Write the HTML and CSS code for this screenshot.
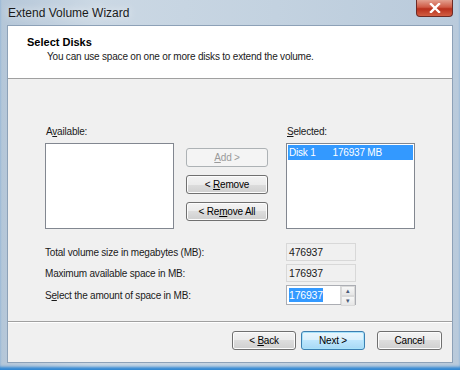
FILE: index.html
```html
<!DOCTYPE html>
<html lang="en">

<head>
    <meta charset="UTF-8">
    <title>Extend Volume Wizard</title>
    <link rel="stylesheet" href="styles.css">
</head>

<body>
    <div class="janela">
        <div class="titulo">
            <span class="titulo-texto">Extend Volume Wizard</span>
            <div class="fechar">
                <svg width="14" height="10" viewBox="0 0 14 10">
                    <path d="M3 1 L11 9 M11 1 L3 9" stroke="#fff" stroke-width="2.4" stroke-linecap="square" />
                </svg>
            </div>
        </div>
        <div class="cliente">
            <div class="cabecalho">
                <h1>Select Disks</h1>
                <p>You can use space on one or more disks to extend the volume.</p>
            </div>
            <div class="corpo">
                <div class="discos">
                    <div class="coluna">
                        <label>A<u>v</u>ailable:</label>
                        <div class="lista"></div>
                    </div>
                    <div class="botoes-meio">
                        <button class="btn" disabled><u>A</u>dd &gt;</button>
                        <button class="btn">&lt; <u>R</u>emove</button>
                        <button class="btn">&lt; Re<u>m</u>ove All</button>
                    </div>
                    <div class="coluna">
                        <label><u>S</u>elected:</label>
                        <div class="lista">
                            <div class="item"><span>Disk 1</span><span>176937 MB</span></div>
                        </div>
                    </div>
                </div>
                <div class="tamanhos">
                    <div class="linha">
                        <span>Total volume size in megabytes (MB):</span>
                        <div class="campo">476937</div>
                    </div>
                    <div class="linha">
                        <span>Maximum available space in MB:</span>
                        <div class="campo">176937</div>
                    </div>
                    <div class="linha">
                        <span>S<u>e</u>lect the amount of space in MB:</span>
                        <div class="campo spin">
                            <span class="sel">176937</span>
                            <div class="setas">
                                <div class="seta">&#9652;</div>
                                <div class="seta">&#9662;</div>
                            </div>
                        </div>
                    </div>
                </div>
            </div>
            <div class="rodape">
                <button class="btn">&lt; <u>B</u>ack</button>
                <button class="btn padrao">Next &gt;</button>
                <button class="btn cancelar">Cancel</button>
            </div>
        </div>
    </div>
</body>

</html>
```
FILE: styles.css
```css
* {
    margin: 0;
    padding: 0;
    box-sizing: border-box;
    font-family: 'Liberation Sans', Arial, sans-serif;
}

body {
    width: 460px;
    height: 370px;
    overflow: hidden;
}

.janela {
    width: 460px;
    height: 370px;
    display: flex;
    flex-direction: column;
    background: linear-gradient(90deg, #b4c6d8, #cbd8e4 20%, #c3d2e0 60%, #b9cadb);
    padding: 0 7px 7px 7px;
    box-shadow: inset 0 -4px 3px -1px #2f86d2;
}

.titulo {
    height: 25px;
    display: flex;
    align-items: center;
    justify-content: space-between;
    position: relative;
}

.titulo-texto {
    font-size: 12px;
    color: #1a1a1a;
    padding-left: 1px;
    text-shadow: 0 0 8px #fff;
}

.fechar {
    position: absolute;
    right: 0;
    top: 0;
    width: 37px;
    height: 17px;
    border: 1px solid #6d2a25;
    border-top: none;
    border-radius: 0 0 4px 4px;
    background: linear-gradient(#e3a08f, #cf5a45 45%, #b8301c 55%, #d25e43);
    display: flex;
    align-items: center;
    justify-content: center;
}

.cliente {
    flex: 1;
    display: flex;
    flex-direction: column;
    background: #f0f0f0;
    border: 1px solid #8da1b7;
    font-size: 10px;
    letter-spacing: -0.2px;
    color: #1a1a1a;
}

.cabecalho {
    height: 53px;
    background: #fff;
    border-bottom: 1px solid #a0a0a0;
    padding: 10px 0 0 19px;
}

.cabecalho h1 {
    font-size: 11px;
    font-weight: bold;
    letter-spacing: 0;
    color: #000;
}

.cabecalho p {
    padding: 3px 0 0 20px;
}

.corpo {
    flex: 1;
    padding: 47px 0 0 37px;
    border-bottom: 1px solid #a0a0a0;
    box-shadow: 0 1px 0 #fff;
}

.discos {
    display: flex;
    align-items: flex-start;
}

.coluna {
    display: flex;
    flex-direction: column;
    gap: 4px;
}

.coluna label {
    padding-left: 1px;
    height: 13px;
}

.lista {
    width: 129px;
    height: 86px;
    background: #fff;
    border: 1px solid #828790;
    padding: 1px;
}

.item {
    height: 15px;
    background: #3399ff;
    color: #fff;
    display: flex;
    gap: 17px;
    align-items: center;
    padding-left: 1px;
}

.botoes-meio {
    display: flex;
    flex-direction: column;
    gap: 8px;
    margin: 22px 18px 0 12px;
}

.btn {
    width: 82px;
    height: 19px;
    font-size: 10px;
    letter-spacing: -0.2px;
    color: #000;
    border: 1px solid #707070;
    border-radius: 3px;
    background: linear-gradient(#f3f3f3, #ebebeb 50%, #dddddd 50%, #cfcfcf);
    box-shadow: inset 0 0 0 1px #fcfcfc;
}

.btn:disabled {
    border-color: #adb2b5;
    background: #f4f4f4;
    color: #9a9a9a;
    box-shadow: none;
}

.tamanhos {
    display: flex;
    flex-direction: column;
    gap: 3px;
    margin-top: 14px;
}

.linha {
    display: flex;
    align-items: center;
    justify-content: space-between;
    width: 311px;
}

.campo {
    width: 70px;
    height: 18px;
    border: 1px solid #d8d8d8;
    background: #f0f0f0;
    padding-left: 2px;
    display: flex;
    align-items: center;
    font-size: 10.5px;
}

.spin {
    height: 20px;
    background: #fff;
    border-color: #abadb3;
    justify-content: space-between;
    padding-right: 0;
}

.sel {
    background: #3399ff;
    color: #fff;
    line-height: 14px;
}

.setas {
    width: 15px;
    height: 18px;
    display: flex;
    flex-direction: column;
    border-left: 1px solid #d8d8d8;
}

.seta {
    flex: 1;
    font-size: 7px;
    color: #4a5b7a;
    display: flex;
    align-items: center;
    justify-content: center;
    background: linear-gradient(#f7f7f7, #e6e6e6);
    border: 1px solid #dadada;
}

.rodape {
    height: 40px;
    display: flex;
    align-items: center;
    justify-content: flex-end;
    gap: 5px;
    padding: 0 10px 4px 0;
}

.rodape .btn {
    width: 64px;
    height: 19px;
}

.padrao {
    border-color: #3c7fb1;
    box-shadow: inset 0 0 0 1px #a8e3fb;
    background: linear-gradient(#eaf6fd, #d9f0fc 50%, #bee6fd 50%, #a7d9f5);
}

.rodape .cancelar {
    width: 65px;
    margin-left: 7px;
}
```
